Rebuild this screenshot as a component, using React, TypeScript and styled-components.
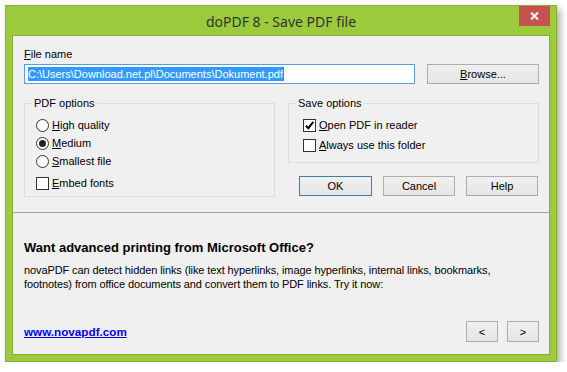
import React from "react"
import styled, { createGlobalStyle } from "styled-components"

const GlobalStyle = createGlobalStyle`
  html, body {
    margin: 0;
    padding: 0;
    background: #fff;
  }
  body {
    font-family: "Liberation Sans", Arial, sans-serif;
    font-size: 11px;
    color: #000;
  }
`

const Window = styled.div`
  box-sizing: border-box;
  margin: 5px 0 0 5px;
  width: 552px;
  height: 357px;
  background: #9bcb3c;
  border: 1px solid #88b236;
  padding: 0 6px 6px;
  display: flex;
  flex-direction: column;
  box-shadow: 3px 4px 7px rgba(0, 0, 0, 0.35);
`

const TitleBar = styled.div`
  height: 29px;
  flex: none;
  display: grid;
  grid-template-columns: 1fr auto 1fr;
  align-items: start;
`

const Title = styled.div`
  grid-column: 2;
  padding-top: 3px;
  line-height: 26px;
  font-family: "Noto Sans", "Open Sans", sans-serif;
  font-size: 14px;
  color: #333;
`

const CloseButton = styled.div`
  grid-column: 3;
  justify-self: end;
  width: 31px;
  height: 20px;
  background: #c75050;
  display: flex;
  align-items: center;
  justify-content: center;
`

const Client = styled.div`
  flex: 1;
  background: #f0f0f0;
  border: 1px solid #84ad38;
  display: flex;
  flex-direction: column;
`

const TopPane = styled.div`
  padding: 12px 10px 0 11px;
  display: flex;
  flex-direction: column;
`

const FieldLabel = styled.div`
  line-height: 13px;
`

const InputRow = styled.div`
  display: flex;
  gap: 12px;
  margin-top: 3px;
`

const TextInput = styled.div`
  box-sizing: border-box;
  width: 391px;
  height: 20px;
  border: 1px solid #569de5;
  background: #fff;
  padding: 0 3px;
  display: flex;
  align-items: center;
`

const Selected = styled.span`
  background: #3399ff;
  color: #fff;
  line-height: 14px;
  white-space: pre;
`

const Caret = styled.span`
  width: 1px;
  height: 14px;
  background: #cc6600;
`

const Button = styled.button<{ $w: number; $primary?: boolean; $h?: number }>`
  box-sizing: border-box;
  width: ${p => p.$w}px;
  height: ${p => p.$h ?? 20}px;
  padding: 0;
  margin: 0;
  border: 1px solid ${p => (p.$primary ? "#3c7fb1" : "#adadad")};
  background: linear-gradient(#f0f0f0, #e5e5e5);
  font-family: "Liberation Sans", Arial, sans-serif;
  font-size: 11px;
  color: #000;
`

const GroupsRow = styled.div`
  display: flex;
  gap: 13px;
  margin-top: 13px;
  align-items: flex-start;
`

const Group = styled.fieldset`
  box-sizing: border-box;
  width: 251px;
  margin: 0;
  border: 1px solid #dcdcdc;
  padding: 0;
`

const GroupBody = styled.div<{ $pad: string }>`
  padding: ${p => p.$pad};
`

const Legend = styled.legend`
  margin-left: 7px;
  padding: 0 2px;
  line-height: 13px;
`

const OptionRow = styled.div<{ $h: number; $gapTop?: number }>`
  height: ${p => p.$h}px;
  margin-top: ${p => p.$gapTop ?? 0}px;
  display: flex;
  align-items: center;
  gap: 3px;
  line-height: 13px;
`

const Radio = styled.span<{ $on?: boolean }>`
  box-sizing: border-box;
  width: 13px;
  height: 13px;
  border-radius: 50%;
  border: 1px solid #333;
  background: #fff;
  display: flex;
  align-items: center;
  justify-content: center;
  &::after {
    content: "";
    display: ${p => (p.$on ? "block" : "none")};
    width: 7px;
    height: 7px;
    border-radius: 50%;
    background: #222;
  }
`

const Box = styled.span`
  box-sizing: border-box;
  width: 13px;
  height: 13px;
  border: 1px solid #333;
  background: #fff;
  display: flex;
  align-items: center;
  justify-content: center;
`

const RightColumn = styled.div`
  width: 251px;
  display: flex;
  flex-direction: column;
`

const ButtonsRow = styled.div`
  margin-top: 13px;
  margin-right: 1px;
  display: flex;
  justify-content: flex-end;
  gap: 11px;
`

const Separator = styled.div`
  margin-top: 15px;
  height: 1px;
  background: #a0a0a0;
`

const BottomPane = styled.div`
  flex: 1;
  display: flex;
  flex-direction: column;
  padding: 0 10px 12px 11px;
`

const Heading = styled.div`
  margin-top: 27px;
  font-weight: bold;
  font-size: 13px;
  line-height: 16px;
`

const Body = styled.div`
  margin-top: 7px;
  line-height: 14px;
  letter-spacing: -0.1px;
`

const Footer = styled.div`
  margin-top: auto;
  display: flex;
  align-items: center;
  justify-content: space-between;
`

const Link = styled.a`
  color: #0000ff;
  font-weight: bold;
  font-size: 11.7px;
  text-decoration: underline;
`

const NavButtons = styled.div`
  display: flex;
  gap: 9px;
`

const Check = () => (
  <svg width="11" height="11" viewBox="0 0 11 11">
    <path d="M1.8 5.6 L4.3 8.2 L9.3 1.8" fill="none" stroke="#000" strokeWidth="1.9" />
  </svg>
)

const CloseIcon = () => (
  <svg width="9" height="8" viewBox="0 0 9 8">
    <path d="M1 0.5 L8 7.5 M8 0.5 L1 7.5" stroke="#fff" strokeWidth="2" />
  </svg>
)

export default function App() {
  return (
    <>
      <GlobalStyle />
      <Window>
        <TitleBar>
          <Title>doPDF 8 - Save PDF file</Title>
          <CloseButton>
            <CloseIcon />
          </CloseButton>
        </TitleBar>
        <Client>
          <TopPane>
            <FieldLabel>
              <u>F</u>ile name
            </FieldLabel>
            <InputRow>
              <TextInput>
                <Selected>C:\Users\Download.net.pl\Documents\Dokument.pdf</Selected>
                <Caret />
              </TextInput>
              <Button $w={112}>
                <u>B</u>rowse...
              </Button>
            </InputRow>
            <GroupsRow>
              <Group>
                <Legend>PDF options</Legend>
                <GroupBody $pad="6px 0 4px 11px">
                  <OptionRow $h={18}>
                    <Radio />
                    <span>
                      <u>H</u>igh quality
                    </span>
                  </OptionRow>
                  <OptionRow $h={18}>
                    <Radio $on />
                    <span>
                      <u>M</u>edium
                    </span>
                  </OptionRow>
                  <OptionRow $h={18}>
                    <Radio />
                    <span>
                      <u>S</u>mallest file
                    </span>
                  </OptionRow>
                  <OptionRow $h={18} $gapTop={4}>
                    <Box />
                    <span>
                      <u>E</u>mbed fonts
                    </span>
                  </OptionRow>
                </GroupBody>
              </Group>
              <RightColumn>
                <Group>
                  <Legend>Save options</Legend>
                  <GroupBody $pad="5px 0 7px 14px">
                    <OptionRow $h={20}>
                      <Box>
                        <Check />
                      </Box>
                      <span>
                        <u>O</u>pen PDF in reader
                      </span>
                    </OptionRow>
                    <OptionRow $h={20}>
                      <Box />
                      <span>
                        <u>A</u>lways use this folder
                      </span>
                    </OptionRow>
                  </GroupBody>
                </Group>
                <ButtonsRow>
                  <Button $w={73} $primary>
                    OK
                  </Button>
                  <Button $w={72}>Cancel</Button>
                  <Button $w={72}>Help</Button>
                </ButtonsRow>
              </RightColumn>
            </GroupsRow>
          </TopPane>
          <Separator />
          <BottomPane>
            <Heading>Want advanced printing from Microsoft Office?</Heading>
            <Body>
              novaPDF can detect hidden links (like text hyperlinks, image hyperlinks, internal links, bookmarks,
              <br />
              footnotes) from office documents and convert them to PDF links. Try it now:
            </Body>
            <Footer>
              <Link href="#">www.novapdf.com</Link>
              <NavButtons>
                <Button $w={32} $h={21}>
                  &lt;
                </Button>
                <Button $w={32} $h={21}>
                  &gt;
                </Button>
              </NavButtons>
            </Footer>
          </BottomPane>
        </Client>
      </Window>
    </>
  )
}
